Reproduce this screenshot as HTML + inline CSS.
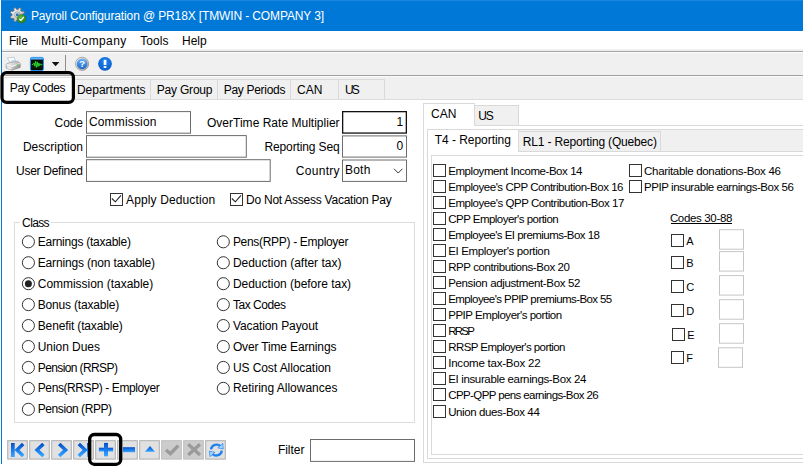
<!DOCTYPE html>
<html>
<head>
<meta charset="utf-8">
<title>Payroll Configuration</title>
<style>
html,body{margin:0;padding:0;}
body{width:803px;height:466px;overflow:hidden;background:#fff;position:relative;font-family:"Liberation Sans",sans-serif;color:#000;}
#root{position:absolute;left:0;top:0;width:803px;height:466px;overflow:hidden;background:#fff;}
.a{position:absolute;box-sizing:border-box;}
.t{position:absolute;white-space:nowrap;line-height:16px;font-family:"Liberation Sans",sans-serif;}
svg{position:absolute;overflow:visible;}
</style>
</head>
<body>
<div id="root">
<div class="a" style="left:1px;top:0px;width:802px;height:31px;background:#0078d7;"></div>
<div class="a" style="left:1px;top:0px;width:802px;height:1px;background:#1c86dc;"></div>
<div class="a" style="left:1px;top:31px;width:1px;height:433px;background:#0078d7;"></div>
<span class="t" style="left:30.88px;top:8.00px;font-size:12px;letter-spacing:-0.123px;color:#fff;">Payroll Configuration @ PR18X [TMWIN - COMPANY 3]</span>
<span class="t" style="left:8.88px;top:33.00px;font-size:12px;letter-spacing:-0.135px;">File</span>
<span class="t" style="left:40.88px;top:33.00px;font-size:12px;letter-spacing:0.386px;">Multi-Company</span>
<span class="t" style="left:140.28px;top:33.00px;font-size:12px;letter-spacing:0.031px;">Tools</span>
<span class="t" style="left:181.98px;top:33.00px;font-size:12px;letter-spacing:0.018px;">Help</span>
<div class="a" style="left:2px;top:49px;width:801px;height:26px;background:#f0f0f0;"></div>
<div class="a" style="left:2px;top:51px;width:801px;height:1px;background:#a3a3a3;"></div>
<div class="a" style="left:2px;top:52px;width:801px;height:1px;background:#fdfdfd;"></div>
<div class="a" style="left:2px;top:75px;width:801px;height:1px;background:#a0a0a0;"></div>
<div class="a" style="left:2px;top:76px;width:801px;height:1px;background:#fbfbfb;"></div>
<div class="a" style="left:65px;top:55px;width:1px;height:16px;background:#8d8d8d;"></div>
<div class="a" style="left:2px;top:77px;width:801px;height:22px;background:#f0f0f0;"></div>
<div class="a" style="left:2px;top:99px;width:801px;height:1px;background:#dcdcdc;"></div>
<div class="a" style="left:75px;top:79px;width:310px;height:1px;background:#d9d9d9;"></div>
<div class="a" style="left:150px;top:79px;width:1px;height:20px;background:#d9d9d9;"></div>
<div class="a" style="left:217px;top:79px;width:1px;height:20px;background:#d9d9d9;"></div>
<div class="a" style="left:290px;top:79px;width:1px;height:20px;background:#d9d9d9;"></div>
<div class="a" style="left:338px;top:79px;width:1px;height:20px;background:#d9d9d9;"></div>
<div class="a" style="left:384px;top:79px;width:1px;height:20px;background:#d9d9d9;"></div>
<div class="a" style="left:2px;top:77px;width:73px;height:24px;background:#fff;"></div>
<div class="a" style="left:4px;top:77px;width:68px;height:1px;background:#e3e3e3;"></div>
<span class="t" style="left:9.78px;top:80.00px;font-size:12px;letter-spacing:-0.370px;">Pay Codes</span>
<span class="t" style="left:76.88px;top:82.00px;font-size:12px;letter-spacing:0.004px;">Departments</span>
<span class="t" style="left:156.78px;top:82.00px;font-size:12px;letter-spacing:-0.204px;">Pay Group</span>
<span class="t" style="left:223.68px;top:82.00px;font-size:12px;letter-spacing:-0.296px;">Pay Periods</span>
<span class="t" style="left:296.98px;top:82.00px;font-size:12px;letter-spacing:-0.002px;">CAN</span>
<span class="t" style="left:344.98px;top:82.00px;font-size:12px;letter-spacing:-1.932px;">US</span>
<svg style="left:0;top:0" width="803" height="466"><rect x="86.5" y="111.6" width="104" height="21.6" fill="#fff" stroke="#6c6c6c" stroke-width="1"/></svg>
<svg style="left:0;top:0" width="803" height="466"><rect x="86.5" y="135.6" width="159.8" height="21.6" fill="#fff" stroke="#6c6c6c" stroke-width="1"/></svg>
<svg style="left:0;top:0" width="803" height="466"><rect x="86.5" y="159.7" width="183.7" height="21.7" fill="#fff" stroke="#6c6c6c" stroke-width="1"/></svg>
<svg style="left:0;top:0" width="803" height="466"><rect x="342.65" y="111.65" width="63.7" height="21.4" fill="#fff" stroke="#111" stroke-width="1.3"/></svg>
<svg style="left:0;top:0" width="803" height="466"><rect x="342.5" y="135.9" width="64" height="21.2" fill="#fff" stroke="#6c6c6c" stroke-width="1"/></svg>
<svg style="left:0;top:0" width="803" height="466"><rect x="342.5" y="160.0" width="64" height="21.4" fill="#fff" stroke="#6c6c6c" stroke-width="1"/></svg>
<svg style="left:0;top:0" width="803" height="466"><rect x="310.5" y="439.5" width="104" height="21.9" fill="#fff" stroke="#6c6c6c" stroke-width="1"/></svg>
<span class="t" style="left:54.58px;top:115.00px;font-size:12px;letter-spacing:-0.116px;">Code</span>
<span class="t" style="left:88.98px;top:114.00px;font-size:12px;letter-spacing:0.158px;">Commission</span>
<span class="t" style="left:22.88px;top:139.00px;font-size:12px;letter-spacing:0.011px;">Description</span>
<span class="t" style="left:16.08px;top:163.00px;font-size:12px;letter-spacing:-0.281px;">User Defined</span>
<span class="t" style="left:206.98px;top:115.00px;font-size:12px;letter-spacing:0.016px;">OverTime Rate Multiplier</span>
<span class="t" style="left:396.48px;top:114.00px;font-size:12px;letter-spacing:0.000px;">1</span>
<span class="t" style="left:264.48px;top:139.00px;font-size:12px;letter-spacing:-0.132px;">Reporting Seq</span>
<span class="t" style="left:396.58px;top:138.00px;font-size:12px;letter-spacing:0.000px;">0</span>
<span class="t" style="left:295.68px;top:163.00px;font-size:12px;letter-spacing:0.318px;">Country</span>
<span class="t" style="left:345.08px;top:162.00px;font-size:12px;letter-spacing:0.184px;">Both</span>
<svg style="left:0;top:0" width="803" height="466"><polyline points="394,168.8 398.2,173 402.4,168.8" fill="none" stroke="#333" stroke-width="1"/></svg>
<svg style="left:0;top:0" width="803" height="466"><rect x="110.5" y="193.5" width="12" height="12" fill="#fff" stroke="#333" stroke-width="1"/><polyline points="111.9,198.5 115.3,201.8 121.0,195.3" fill="none" stroke="#222" stroke-width="1.1"/></svg>
<svg style="left:0;top:0" width="803" height="466"><rect x="230.5" y="193.5" width="12" height="12" fill="#fff" stroke="#333" stroke-width="1"/><polyline points="231.9,198.5 235.3,201.8 241.0,195.3" fill="none" stroke="#222" stroke-width="1.1"/></svg>
<span class="t" style="left:126.08px;top:192.00px;font-size:12px;letter-spacing:0.125px;">Apply Deduction</span>
<span class="t" style="left:246.08px;top:192.00px;font-size:12px;letter-spacing:-0.249px;">Do Not Assess Vacation Pay</span>
<div class="a" style="left:14px;top:222px;width:401px;height:201px;border:1px solid #dcdcdc;"></div>
<div class="a" style="left:20px;top:215px;width:31px;height:14px;background:#fff;"></div>
<span class="t" style="left:22.08px;top:215.00px;font-size:12px;letter-spacing:-0.619px;">Class</span>
<svg style="left:0;top:0" width="803" height="466"><circle cx="28.4" cy="241.8" r="6.05" fill="#fff" stroke="#333" stroke-width="1"/></svg>
<span class="t" style="left:37.78px;top:234.00px;font-size:12px;letter-spacing:-0.250px;">Earnings (taxable)</span>
<svg style="left:0;top:0" width="803" height="466"><circle cx="28.4" cy="262.74" r="6.05" fill="#fff" stroke="#333" stroke-width="1"/></svg>
<span class="t" style="left:37.78px;top:255.00px;font-size:12px;letter-spacing:-0.167px;">Earnings (non taxable)</span>
<svg style="left:0;top:0" width="803" height="466"><circle cx="28.4" cy="283.68" r="6.05" fill="#fff" stroke="#333" stroke-width="1"/><circle cx="28.4" cy="283.68" r="3.5" fill="#222"/></svg>
<span class="t" style="left:37.78px;top:276.00px;font-size:12px;letter-spacing:-0.032px;">Commission (taxable)</span>
<svg style="left:0;top:0" width="803" height="466"><circle cx="28.4" cy="304.62" r="6.05" fill="#fff" stroke="#333" stroke-width="1"/></svg>
<span class="t" style="left:37.78px;top:297.00px;font-size:12px;letter-spacing:-0.186px;">Bonus (taxable)</span>
<svg style="left:0;top:0" width="803" height="466"><circle cx="28.4" cy="325.56" r="6.05" fill="#fff" stroke="#333" stroke-width="1"/></svg>
<span class="t" style="left:37.78px;top:318.00px;font-size:12px;letter-spacing:-0.147px;">Benefit (taxable)</span>
<svg style="left:0;top:0" width="803" height="466"><circle cx="28.4" cy="346.5" r="6.05" fill="#fff" stroke="#333" stroke-width="1"/></svg>
<span class="t" style="left:37.78px;top:339.00px;font-size:12px;letter-spacing:-0.063px;">Union Dues</span>
<svg style="left:0;top:0" width="803" height="466"><circle cx="28.4" cy="367.44000000000005" r="6.05" fill="#fff" stroke="#333" stroke-width="1"/></svg>
<span class="t" style="left:37.78px;top:360.00px;font-size:12px;letter-spacing:-0.607px;">Pension (RRSP)</span>
<svg style="left:0;top:0" width="803" height="466"><circle cx="28.4" cy="388.38" r="6.05" fill="#fff" stroke="#333" stroke-width="1"/></svg>
<span class="t" style="left:37.78px;top:380.00px;font-size:12px;letter-spacing:-0.405px;">Pens(RRSP) - Employer</span>
<svg style="left:0;top:0" width="803" height="466"><circle cx="28.4" cy="409.32000000000005" r="6.05" fill="#fff" stroke="#333" stroke-width="1"/></svg>
<span class="t" style="left:37.78px;top:401.00px;font-size:12px;letter-spacing:-0.420px;">Pension (RPP)</span>
<svg style="left:0;top:0" width="803" height="466"><circle cx="223.3" cy="241.8" r="6.05" fill="#fff" stroke="#333" stroke-width="1"/></svg>
<span class="t" style="left:232.88px;top:234.00px;font-size:12px;letter-spacing:-0.307px;">Pens(RPP) - Employer</span>
<svg style="left:0;top:0" width="803" height="466"><circle cx="223.3" cy="262.74" r="6.05" fill="#fff" stroke="#333" stroke-width="1"/></svg>
<span class="t" style="left:232.88px;top:255.00px;font-size:12px;letter-spacing:-0.009px;">Deduction (after tax)</span>
<svg style="left:0;top:0" width="803" height="466"><circle cx="223.3" cy="283.68" r="6.05" fill="#fff" stroke="#333" stroke-width="1"/></svg>
<span class="t" style="left:232.88px;top:276.00px;font-size:12px;letter-spacing:-0.024px;">Deduction (before tax)</span>
<svg style="left:0;top:0" width="803" height="466"><circle cx="223.3" cy="304.62" r="6.05" fill="#fff" stroke="#333" stroke-width="1"/></svg>
<span class="t" style="left:232.88px;top:297.00px;font-size:12px;letter-spacing:-0.445px;">Tax Codes</span>
<svg style="left:0;top:0" width="803" height="466"><circle cx="223.3" cy="325.56" r="6.05" fill="#fff" stroke="#333" stroke-width="1"/></svg>
<span class="t" style="left:232.88px;top:318.00px;font-size:12px;letter-spacing:-0.091px;">Vacation Payout</span>
<svg style="left:0;top:0" width="803" height="466"><circle cx="223.3" cy="346.5" r="6.05" fill="#fff" stroke="#333" stroke-width="1"/></svg>
<span class="t" style="left:232.88px;top:339.00px;font-size:12px;letter-spacing:-0.147px;">Over Time Earnings</span>
<svg style="left:0;top:0" width="803" height="466"><circle cx="223.3" cy="367.44000000000005" r="6.05" fill="#fff" stroke="#333" stroke-width="1"/></svg>
<span class="t" style="left:232.88px;top:360.00px;font-size:12px;letter-spacing:-0.074px;">US Cost Allocation</span>
<svg style="left:0;top:0" width="803" height="466"><circle cx="223.3" cy="388.38" r="6.05" fill="#fff" stroke="#333" stroke-width="1"/></svg>
<span class="t" style="left:232.88px;top:380.00px;font-size:12px;letter-spacing:-0.010px;">Retiring Allowances</span>
<svg style="left:0;top:0" width="803" height="466"><rect x="7.7" y="440.7" width="19.6" height="18.4" fill="#e1e1e1" stroke="#adadad" stroke-width="1"/></svg>
<svg style="left:0;top:0" width="803" height="466"><rect x="29.7" y="440.7" width="19.6" height="18.4" fill="#e1e1e1" stroke="#adadad" stroke-width="1"/></svg>
<svg style="left:0;top:0" width="803" height="466"><rect x="51.7" y="440.7" width="19.6" height="18.4" fill="#e1e1e1" stroke="#adadad" stroke-width="1"/></svg>
<svg style="left:0;top:0" width="803" height="466"><rect x="73.7" y="440.7" width="19.6" height="18.4" fill="#e1e1e1" stroke="#adadad" stroke-width="1"/></svg>
<svg style="left:0;top:0" width="803" height="466"><rect x="95.7" y="440.7" width="19.6" height="18.4" fill="#e1e1e1" stroke="#adadad" stroke-width="1"/></svg>
<svg style="left:0;top:0" width="803" height="466"><rect x="117.7" y="440.7" width="19.6" height="18.4" fill="#e1e1e1" stroke="#adadad" stroke-width="1"/></svg>
<svg style="left:0;top:0" width="803" height="466"><rect x="139.7" y="440.7" width="19.6" height="18.4" fill="#e1e1e1" stroke="#adadad" stroke-width="1"/></svg>
<svg style="left:0;top:0" width="803" height="466"><rect x="161.7" y="440.7" width="19.6" height="18.4" fill="#cccccc" stroke="#bcbcbc" stroke-width="1"/></svg>
<svg style="left:0;top:0" width="803" height="466"><rect x="183.7" y="440.7" width="19.6" height="18.4" fill="#cccccc" stroke="#bcbcbc" stroke-width="1"/></svg>
<svg style="left:0;top:0" width="803" height="466"><rect x="205.7" y="440.7" width="19.6" height="18.4" fill="#e1e1e1" stroke="#adadad" stroke-width="1"/></svg>
<span class="t" style="left:277.88px;top:442.00px;font-size:12px;letter-spacing:-0.006px;">Filter</span>
<div class="a" style="left:423px;top:125px;width:400px;height:338px;background:#fff;border:1px solid #d9d9d9;"></div>
<div class="a" style="left:474px;top:105px;width:45px;height:21px;background:#f0f0f0;border:1px solid #d9d9d9;"></div>
<div class="a" style="left:423px;top:103px;width:52px;height:23px;background:#fff;border:1px solid #d9d9d9;border-bottom:none;"></div>
<span class="t" style="left:430.88px;top:106.00px;font-size:12px;letter-spacing:0.098px;">CAN</span>
<span class="t" style="left:478.28px;top:108.00px;font-size:12px;letter-spacing:-1.232px;">US</span>
<div class="a" style="left:427px;top:129px;width:400px;height:23px;background:#f0f0f0;border:1px solid #d9d9d9;"></div>
<div class="a" style="left:427px;top:151px;width:400px;height:308px;background:#fff;border:1px solid #d9d9d9;"></div>
<div class="a" style="left:518px;top:131px;width:143px;height:21px;background:#f0f0f0;border:1px solid #d9d9d9;"></div>
<div class="a" style="left:427px;top:129px;width:92px;height:23px;background:#fff;border:1px solid #d9d9d9;border-bottom:none;"></div>
<span class="t" style="left:434.68px;top:132.00px;font-size:12px;letter-spacing:-0.036px;">T4 - Reporting</span>
<span class="t" style="left:522.78px;top:134.00px;font-size:12px;letter-spacing:-0.171px;">RL1 - Reporting (Quebec)</span>
<div class="a" style="left:431px;top:155px;width:400px;height:300px;border:1px solid #d9d9d9;"></div>
<svg style="left:0;top:0" width="803" height="466"><rect x="433.5" y="164.5" width="12" height="12" fill="#fff" stroke="#333" stroke-width="1"/></svg>
<span class="t" style="left:448.21px;top:163.00px;font-size:11.5px;letter-spacing:-0.442px;">Employment Income-Box 14</span>
<svg style="left:0;top:0" width="803" height="466"><rect x="433.5" y="180.5" width="12" height="12" fill="#fff" stroke="#333" stroke-width="1"/></svg>
<span class="t" style="left:448.21px;top:179.00px;font-size:11.5px;letter-spacing:-0.463px;">Employee&#x27;s CPP Contribution-Box 16</span>
<svg style="left:0;top:0" width="803" height="466"><rect x="433.5" y="196.5" width="12" height="12" fill="#fff" stroke="#333" stroke-width="1"/></svg>
<span class="t" style="left:448.21px;top:195.00px;font-size:11.5px;letter-spacing:-0.458px;">Employee&#x27;s QPP Contribution-Box 17</span>
<svg style="left:0;top:0" width="803" height="466"><rect x="433.5" y="212.5" width="12" height="12" fill="#fff" stroke="#333" stroke-width="1"/></svg>
<span class="t" style="left:448.21px;top:211.00px;font-size:11.5px;letter-spacing:-0.526px;">CPP Employer&#x27;s portion</span>
<svg style="left:0;top:0" width="803" height="466"><rect x="433.5" y="228.5" width="12" height="12" fill="#fff" stroke="#333" stroke-width="1"/></svg>
<span class="t" style="left:448.21px;top:227.00px;font-size:11.5px;letter-spacing:-0.524px;">Employee&#x27;s EI premiums-Box 18</span>
<svg style="left:0;top:0" width="803" height="466"><rect x="433.5" y="244.5" width="12" height="12" fill="#fff" stroke="#333" stroke-width="1"/></svg>
<span class="t" style="left:448.21px;top:243.00px;font-size:11.5px;letter-spacing:-0.368px;">EI Employer&#x27;s portion</span>
<svg style="left:0;top:0" width="803" height="466"><rect x="433.5" y="260.5" width="12" height="12" fill="#fff" stroke="#333" stroke-width="1"/></svg>
<span class="t" style="left:448.21px;top:259.00px;font-size:11.5px;letter-spacing:-0.426px;">RPP contributions-Box 20</span>
<svg style="left:0;top:0" width="803" height="466"><rect x="433.5" y="276.5" width="12" height="12" fill="#fff" stroke="#333" stroke-width="1"/></svg>
<span class="t" style="left:448.21px;top:275.00px;font-size:11.5px;letter-spacing:-0.353px;">Pension adjustment-Box 52</span>
<svg style="left:0;top:0" width="803" height="466"><rect x="433.5" y="292.5" width="12" height="12" fill="#fff" stroke="#333" stroke-width="1"/></svg>
<span class="t" style="left:448.21px;top:291.00px;font-size:11.5px;letter-spacing:-0.584px;">Employee&#x27;s PPIP premiums-Box 55</span>
<svg style="left:0;top:0" width="803" height="466"><rect x="433.5" y="308.5" width="12" height="12" fill="#fff" stroke="#333" stroke-width="1"/></svg>
<span class="t" style="left:448.21px;top:307.00px;font-size:11.5px;letter-spacing:-0.464px;">PPIP Employer&#x27;s portion</span>
<svg style="left:0;top:0" width="803" height="466"><rect x="433.5" y="324.5" width="12" height="12" fill="#fff" stroke="#333" stroke-width="1"/></svg>
<span class="t" style="left:448.21px;top:323.00px;font-size:11.5px;letter-spacing:-1.724px;">RRSP</span>
<svg style="left:0;top:0" width="803" height="466"><rect x="433.5" y="340.5" width="12" height="12" fill="#fff" stroke="#333" stroke-width="1"/></svg>
<span class="t" style="left:448.21px;top:339.00px;font-size:11.5px;letter-spacing:-0.570px;">RRSP Employer&#x27;s portion</span>
<svg style="left:0;top:0" width="803" height="466"><rect x="433.5" y="356.5" width="12" height="12" fill="#fff" stroke="#333" stroke-width="1"/></svg>
<span class="t" style="left:448.21px;top:355.00px;font-size:11.5px;letter-spacing:-0.219px;">Income tax-Box 22</span>
<svg style="left:0;top:0" width="803" height="466"><rect x="433.5" y="372.5" width="12" height="12" fill="#fff" stroke="#333" stroke-width="1"/></svg>
<span class="t" style="left:448.21px;top:371.00px;font-size:11.5px;letter-spacing:-0.352px;">EI insurable earnings-Box 24</span>
<svg style="left:0;top:0" width="803" height="466"><rect x="433.5" y="388.5" width="12" height="12" fill="#fff" stroke="#333" stroke-width="1"/></svg>
<span class="t" style="left:448.21px;top:387.00px;font-size:11.5px;letter-spacing:-0.599px;">CPP-QPP pens earnings-Box 26</span>
<svg style="left:0;top:0" width="803" height="466"><rect x="433.5" y="405.5" width="12" height="12" fill="#fff" stroke="#333" stroke-width="1"/></svg>
<span class="t" style="left:448.21px;top:404.00px;font-size:11.5px;letter-spacing:-0.390px;">Union dues-Box 44</span>
<svg style="left:0;top:0" width="803" height="466"><rect x="629.5" y="164.5" width="12" height="12" fill="#fff" stroke="#333" stroke-width="1"/></svg>
<span class="t" style="left:644.11px;top:163.00px;font-size:11.5px;letter-spacing:-0.321px;">Charitable donations-Box 46</span>
<svg style="left:0;top:0" width="803" height="466"><rect x="629.5" y="180.5" width="12" height="12" fill="#fff" stroke="#333" stroke-width="1"/></svg>
<span class="t" style="left:644.11px;top:179.00px;font-size:11.5px;letter-spacing:-0.449px;">PPIP insurable earnings-Box 56</span>
<span class="t" style="left:669.91px;top:210.00px;font-size:11.5px;letter-spacing:-0.338px;">Codes 30-88</span>
<div class="a" style="left:670.5px;top:223px;width:61.5px;height:1px;background:#000;"></div>
<svg style="left:0;top:0" width="803" height="466"><rect x="671.5" y="234.5" width="12" height="12" fill="#fff" stroke="#333" stroke-width="1"/></svg>
<span class="t" style="left:686.24px;top:233.00px;font-size:11px;letter-spacing:0.000px;">A</span>
<svg style="left:0;top:0" width="803" height="466"><rect x="719.5" y="229.7" width="24" height="19.5" fill="#fff" stroke="#c6c6c6" stroke-width="1"/></svg>
<svg style="left:0;top:0" width="803" height="466"><rect x="671.5" y="256.5" width="12" height="12" fill="#fff" stroke="#333" stroke-width="1"/></svg>
<span class="t" style="left:686.24px;top:255.00px;font-size:11px;letter-spacing:0.000px;">B</span>
<svg style="left:0;top:0" width="803" height="466"><rect x="719.5" y="251.6" width="24" height="19.5" fill="#fff" stroke="#c6c6c6" stroke-width="1"/></svg>
<svg style="left:0;top:0" width="803" height="466"><rect x="671.5" y="280.5" width="12" height="12" fill="#fff" stroke="#333" stroke-width="1"/></svg>
<span class="t" style="left:686.24px;top:279.00px;font-size:11px;letter-spacing:0.000px;">C</span>
<svg style="left:0;top:0" width="803" height="466"><rect x="719.5" y="275.6" width="24" height="19.5" fill="#fff" stroke="#c6c6c6" stroke-width="1"/></svg>
<svg style="left:0;top:0" width="803" height="466"><rect x="671.5" y="304.5" width="12" height="12" fill="#fff" stroke="#333" stroke-width="1"/></svg>
<span class="t" style="left:686.24px;top:303.00px;font-size:11px;letter-spacing:0.000px;">D</span>
<svg style="left:0;top:0" width="803" height="466"><rect x="719.5" y="299.7" width="24" height="19.5" fill="#fff" stroke="#c6c6c6" stroke-width="1"/></svg>
<svg style="left:0;top:0" width="803" height="466"><rect x="672.5" y="328.5" width="12" height="12" fill="#fff" stroke="#333" stroke-width="1"/></svg>
<span class="t" style="left:687.24px;top:327.00px;font-size:11px;letter-spacing:0.000px;">E</span>
<svg style="left:0;top:0" width="803" height="466"><rect x="719.5" y="323.7" width="24" height="19.5" fill="#fff" stroke="#c6c6c6" stroke-width="1"/></svg>
<svg style="left:0;top:0" width="803" height="466"><rect x="671.5" y="351.5" width="12" height="12" fill="#fff" stroke="#333" stroke-width="1"/></svg>
<span class="t" style="left:686.24px;top:350.00px;font-size:11px;letter-spacing:0.000px;">F</span>
<svg style="left:0;top:0" width="803" height="466"><rect x="718.5" y="347.8" width="24" height="19.5" fill="#fff" stroke="#c6c6c6" stroke-width="1"/></svg>
<svg style="left:0;top:0" width="803" height="466"><defs><linearGradient id="gg" x1="0" y1="0" x2="1" y2="1"><stop offset="0" stop-color="#ffffff"/><stop offset="1" stop-color="#a9a9a9"/></linearGradient><radialGradient id="gr" cx="0.4" cy="0.35" r="0.7"><stop offset="0" stop-color="#5cb83c"/><stop offset="1" stop-color="#267d14"/></radialGradient></defs><path d="M22.74,15.58 L24.48,16.57 L23.66,18.56 L21.73,18.03 L20.63,19.13 L21.16,21.06 L19.17,21.88 L18.18,20.14 L16.62,20.14 L15.63,21.88 L13.64,21.06 L14.17,19.13 L13.07,18.03 L11.14,18.56 L10.32,16.57 L12.06,15.58 L12.06,14.02 L10.32,13.03 L11.14,11.04 L13.07,11.57 L14.17,10.47 L13.64,8.54 L15.63,7.72 L16.62,9.46 L18.18,9.46 L19.17,7.72 L21.16,8.54 L20.63,10.47 L21.73,11.57 L23.66,11.04 L24.48,13.03 L22.74,14.02Z" fill="url(#gg)" stroke="#6f7378" stroke-width="0.8"/><circle cx="17.2" cy="14.7" r="2.9" fill="none" stroke="#9aa0a8" stroke-width="0.8"/><circle cx="17.3" cy="14.8" r="1.5" fill="#2f6fc0"/><circle cx="21.5" cy="18.7" r="4.3" fill="url(#gr)" stroke="#2a7a18" stroke-width="0.5"/><polyline points="19.3,18.9 20.9,20.4 23.8,17.0" fill="none" stroke="#fff" stroke-width="1.3"/></svg>
<svg style="left:0;top:0" width="803" height="466"><defs><linearGradient id="pb" x1="0" y1="0" x2="1" y2="0.6"><stop offset="0" stop-color="#fbfbfb"/><stop offset="0.55" stop-color="#d2d2d2"/><stop offset="1" stop-color="#8c8c8c"/></linearGradient></defs><path d="M7.4,58 L14,57.2 L16.2,62.2 L10.4,63.4Z" fill="#fff" stroke="#9fb0bc" stroke-width="0.6"/><path d="M10.6,60.4 L14.6,59.4 L15.6,61.8 L11.4,62.8Z" fill="#bfe0f8"/><path d="M6.2,64.2 L9.8,62.6 L17.6,61.4 L20.2,63.2 L20.2,67.4 L11.8,70.2 L6.2,68Z" fill="url(#pb)" stroke="#8f8f8f" stroke-width="0.7"/><path d="M6.6,64.6 L11.8,66.4 L19.9,63.5" fill="none" stroke="#fff" stroke-width="0.9"/><path d="M7.2,66.6 L11.6,68 L11.6,69.6 L7.2,68.2Z" fill="#fff" stroke="#c4c4c4" stroke-width="0.4"/><rect x="16.8" y="64.3" width="1.7" height="1.1" fill="#35c635"/></svg>
<svg style="left:0;top:0" width="803" height="466"><rect x="30.4" y="57.4" width="13" height="13.2" rx="1.6" fill="#000" stroke="#1e90ff" stroke-width="1"/><rect x="30.9" y="57.6" width="12" height="2" fill="#5ab4ff"/><rect x="31.6" y="60.4" width="10.8" height="9" fill="#021a02"/><polyline points="31.8,64.8 33.2,64.4 34,63 34.8,66.2 35.6,61.4 36.4,67.4 37.2,61.8 38,66.6 38.8,63 39.6,65.6 40.4,63.8 41.2,65 42.4,64.6" fill="none" stroke="#30d830" stroke-width="0.95"/></svg>
<svg style="left:0;top:0" width="803" height="466"><path d="M51.8,61.9 L59.4,61.9 L55.6,66.2Z" fill="#111"/></svg>
<svg style="left:0;top:0" width="803" height="466"><defs><linearGradient id="hb" x1="0" y1="0" x2="0" y2="1"><stop offset="0" stop-color="#6fb4f4"/><stop offset="1" stop-color="#1a66d2"/></linearGradient><linearGradient id="hr" x1="0" y1="0" x2="1" y2="1"><stop offset="0" stop-color="#fafafa"/><stop offset="1" stop-color="#9a9a9a"/></linearGradient></defs><circle cx="82.1" cy="63.8" r="6.6" fill="url(#hr)" stroke="#8e8e8e" stroke-width="0.7"/><circle cx="82.1" cy="63.8" r="5.3" fill="url(#hb)"/><text x="82.1" y="67.2" text-anchor="middle" font-family="Liberation Sans,sans-serif" font-weight="bold" font-size="9.5" fill="#fff">?</text></svg>
<svg style="left:0;top:0" width="803" height="466"><defs><radialGradient id="ib" cx="0.5" cy="0.35" r="0.75"><stop offset="0" stop-color="#1f86f2"/><stop offset="1" stop-color="#0456c4"/></radialGradient></defs><circle cx="105" cy="63.8" r="6.9" fill="url(#ib)"/><rect x="103.7" y="59.8" width="2.7" height="5.2" fill="#fff"/><rect x="103.7" y="66.1" width="2.7" height="1.8" fill="#fff"/></svg>
<svg style="left:0;top:0" width="803" height="466"><defs><linearGradient id="nb" x1="0" y1="0" x2="0" y2="1"><stop offset="0" stop-color="#0b4fc4"/><stop offset="0.55" stop-color="#1b7fee"/><stop offset="1" stop-color="#3aa6ff"/></linearGradient></defs><rect x="11" y="443" width="3.7" height="14" fill="url(#nb)"/><polyline points="23.2,443.9 17,450 23.2,456.1" fill="none" stroke="url(#nb)" stroke-width="3.5" stroke-linejoin="miter"/><polyline points="43.4,443.9 37,450 43.4,456.1" fill="none" stroke="url(#nb)" stroke-width="3.5" stroke-linejoin="miter"/><polyline points="59.2,443.9 65.6,450 59.2,456.1" fill="none" stroke="url(#nb)" stroke-width="3.5" stroke-linejoin="miter"/><polyline points="78.8,443.9 85.2,450 78.8,456.1" fill="none" stroke="url(#nb)" stroke-width="3.5" stroke-linejoin="miter"/><rect x="87" y="443" width="3.7" height="14" fill="url(#nb)"/><rect x="98.9" y="447.7" width="14.2" height="3.8" fill="url(#nb)"/><rect x="104" y="442.9" width="4" height="13.4" fill="url(#nb)"/><rect x="122.9" y="447.2" width="12.1" height="5" fill="url(#nb)"/><path d="M144.9,451.8 L155,451.8 L150,446Z" fill="url(#nb)"/><polyline points="166,450 170.4,453.6 178.2,445.6" fill="none" stroke="#9a9a9a" stroke-width="3.4"/><path d="M188.2,444.3 L200,455 M200,444.3 L188.2,455" fill="none" stroke="#9a9a9a" stroke-width="3.3"/><path d="M211,449.4 A5.6,5.6 0 0 1 220.6,446.4" fill="none" stroke="#1e82f0" stroke-width="2.4"/><path d="M217.8,447.8 L223.2,449 L222.8,443.4Z" fill="#a8d4ff" stroke="#1e82f0" stroke-width="0.7"/><path d="M221.8,450.6 A5.6,5.6 0 0 1 212.4,454" fill="none" stroke="#1e82f0" stroke-width="2.4"/><path d="M215,452.4 L209.4,451.2 L210,456.6Z" fill="#a8d4ff" stroke="#1e82f0" stroke-width="0.7"/></svg>
<svg style="left:0;top:0" width="803" height="466"><rect x="2" y="72.6" width="71.4" height="29.8" rx="4.6" fill="none" stroke="#000" stroke-width="3.2"/></svg>
<svg style="left:0;top:0" width="803" height="466"><rect x="89.7" y="434.5" width="31" height="29.8" rx="4.6" fill="none" stroke="#000" stroke-width="3.3"/></svg>
</div>
</body>
</html>
